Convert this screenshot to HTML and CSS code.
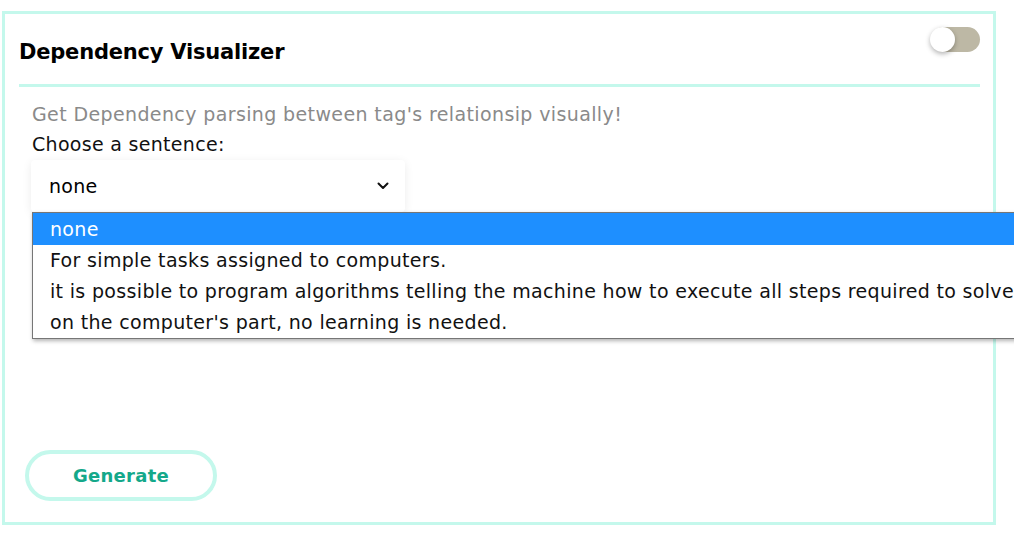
FILE: index.html
```html
<!DOCTYPE html>
<html lang="en">
<head>
<meta charset="utf-8">
<title>Dependency Visualizer</title>
<link rel="stylesheet" href="styles.css">
</head>
<body>
<div class="card">
  <div class="card-head">
    <h1 class="title">Dependency Visualizer</h1>
    <div class="toggle"><span class="knob"></span></div>
  </div>
  <div class="card-body">
    <p class="desc">Get Dependency parsing between tag's relationsip visually!</p>
    <p class="label">Choose a sentence:</p>
    <div class="select-wrap">
      <div class="select">
        <span class="select-value">none</span>
        <svg class="chevron" width="12" height="8" viewBox="0 0 12 8"><path d="M1.5 1.5 L6 6 L10.5 1.5" fill="none" stroke="#111" stroke-width="2" stroke-linecap="round" stroke-linejoin="round"/></svg>
      </div>
      <ul class="options">
        <li class="opt selected">none</li>
        <li class="opt">For simple tasks assigned to computers.</li>
        <li class="opt">it is possible to program algorithms telling the machine how to execute all steps required to solve the problem at hand;</li>
        <li class="opt">on the computer's part, no learning is needed.</li>
      </ul>
    </div>
    <div class="spacer"></div>
    <button class="btn">Generate</button>
  </div>
</div>
</body>
</html>
```

FILE: styles.css
```css
html, body {
  margin: 0;
  padding: 0;
  background: #ffffff;
  overflow: hidden;
}
body {
  font-family: "DejaVu Sans", "Noto Sans", sans-serif;
  color: #000;
}
.card {
  margin: 11px 0 0 2px;
  width: 994px;
  height: 514px;
  box-sizing: border-box;
  border: 3px solid #c4f8ec;
  display: flex;
  flex-direction: column;
}
.card-head {
  margin: 0 13px 0 14px;
  height: 70px;
  border-bottom: 3px solid #c4f8ec;
  display: flex;
  justify-content: space-between;
  align-items: flex-start;
}
.title {
  margin: 24px 0 0 0;
  font-size: 21px;
  font-weight: 700;
  letter-spacing: -0.2px;
  line-height: 28px;
}
.toggle {
  margin-top: 13px;
  width: 49px;
  height: 25px;
  border-radius: 13px;
  background: #bdb8a5;
  position: relative;
}
.knob {
  position: absolute;
  left: -1px;
  top: 0;
  width: 25px;
  height: 25px;
  border-radius: 50%;
  background: #fff;
  box-shadow: 0 2px 5px rgba(0,0,0,0.3);
}
.card-body {
  flex: 1;
  display: flex;
  flex-direction: column;
  align-items: flex-start;
  padding: 12px 0 21px 27px;
}
.desc {
  margin: 0;
  font-size: 19px;
  letter-spacing: 0.38px;
  line-height: 30px;
  color: #8a8a8a;
}
.label {
  margin: 0;
  font-size: 19px;
  letter-spacing: 0.3px;
  line-height: 30px;
  color: #111;
}
.select-wrap {
  position: relative;
  margin-top: 1px;
  margin-left: -1px;
}
.select {
  width: 374px;
  height: 52px;
  box-sizing: border-box;
  padding: 0 16px 0 18px;
  display: flex;
  align-items: center;
  justify-content: space-between;
  background: #fff;
  border-radius: 4px;
  box-shadow: 0 2px 10px rgba(0,0,0,0.08);
  font-size: 19px;
  letter-spacing: 0.3px;
}
.chevron {
  display: block;
}
.options {
  position: absolute;
  left: 1px;
  top: 52px;
  width: 1000px;
  margin: 0;
  padding: 0;
  list-style: none;
  background: #fff;
  border: 1px solid #767676;
  box-shadow: 1px 2px 4px rgba(0,0,0,0.3);
  white-space: nowrap;
  overflow: hidden;
  z-index: 2;
}
.opt {
  height: 31px;
  line-height: 31px;
  padding-left: 17px;
  font-size: 19px;
  letter-spacing: 0.33px;
  color: #111;
}
.opt.selected {
  height: 32px;
  line-height: 32px;
  background: #1e8fff;
  color: #fff;
}
.spacer {
  flex: 1;
}
.btn {
  margin-left: -7px;
  width: 192px;
  height: 51px;
  border: 4px solid #c4f8ec;
  border-radius: 26px;
  background: #fff;
  font-family: inherit;
  font-size: 18px;
  font-weight: 700;
  letter-spacing: 0.3px;
  color: #14a88a;
  cursor: pointer;
}
```
